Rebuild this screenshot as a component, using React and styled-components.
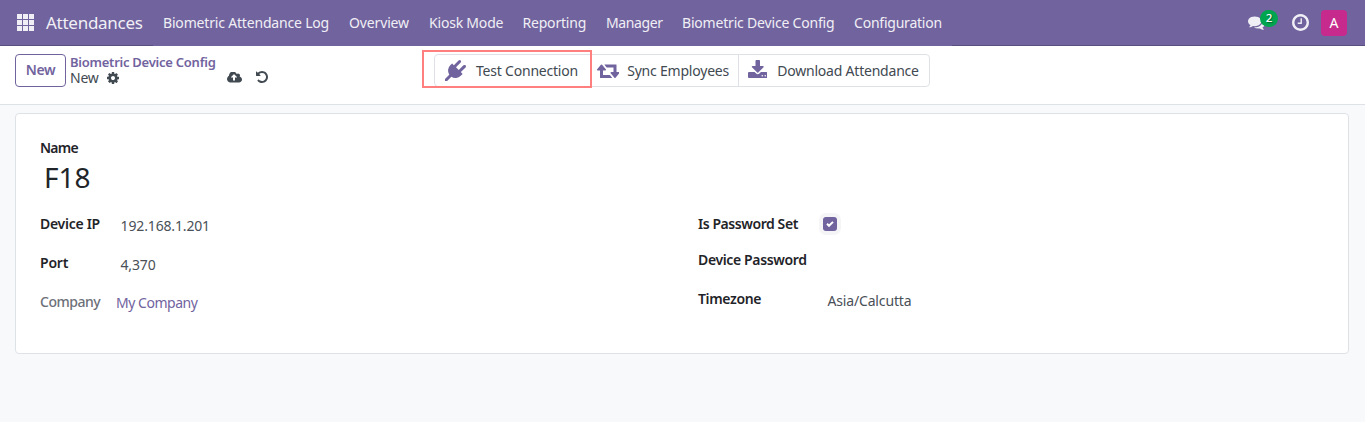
import React from "react";
import styled, { createGlobalStyle } from "styled-components";

const purple = "#71639e";
const line = "#dee2e6";
const text = "#414951";

const GlobalStyle = createGlobalStyle`
  *, *::before, *::after { box-sizing: border-box; }
  body {
    margin: 0;
    background: #f8f9fa;
    color: ${text};
    font-family: "Noto Sans", "Open Sans", sans-serif;
    font-size: 14px;
    line-height: 20px;
  }
`;

const glyphs = {
  plug: ["0 0 1792 1792", "M1755 453q37 38 37 90.5t-37 90.5l-401 400 150 150-160 160q-163 163-389.5 186.5t-411.5-100.5l-362 362h-181v-181l362-362q-124-185-100.5-411.5t186.5-389.5l160-160 150 150 400-401q38-37 91-37t90 37 37 90.5-37 90.5l-400 401 234 234 401-400q38-37 91-37t90 37z"],
  sync: ["64 0 1920 1792", "M1344 1504q0 13-9.5 22.5t-22.5 9.5h-960q-8 0-13.5-2t-9-7-5.5-8-3-11.5-1-11.5v-600h-192q-26 0-45-19t-19-45q0-24 15-41l320-384q19-22 49-22t49 22l320 384q15 17 15 41 0 26-19 45t-45 19h-192v384h576q16 0 25 11l160 192q7 10 7 21zm640-416q0 24-15 41l-320 384q-20 23-49 23t-49-23l-320-384q-15-17-15-41 0-26 19-45t45-19h192v-384h-576q-16 0-25-12l-160-192q-7-9-7-20 0-13 9.5-22.5t22.5-9.5h960q8 0 13.5 2t9 7 5.5 8 3 11.5 1 11.5v600h192q26 0 45 19t19 45z"],
  download: ["64 0 1664 1792", "M1344 1344q0-26-19-45t-45-19-45 19-19 45 19 45 45 19 45-19 19-45zm256 0q0-26-19-45t-45-19-45 19-19 45 19 45 45 19 45-19 19-45zm128-224v320q0 40-28 68t-68 28h-1472q-40 0-68-28t-28-68v-320q0-40 28-68t68-28h465l135 136q58 56 136 56t136-56l136-136h464q40 0 68 28t28 68zm-325-569q17 41-14 70l-448 448q-18 19-45 19t-45-19l-448-448q-31-29-14-70 17-39 59-39h256v-448q0-26 19-45t45-19h256q26 0 45 19t19 45v448h256q42 0 59 39z"],
  cog: ["128 128 1536 1536", "M1152 896q0-106-75-181t-181-75-181 75-75 181 75 181 181 75 181-75 75-181zm512-109v222q0 12-8 23t-20 13l-185 28q-19 54-39 91 35 50 107 138 10 12 10 25t-9 23q-27 37-99 108t-94 71q-12 0-26-9l-138-108q-44 23-91 38-16 136-29 186-7 28-36 28h-222q-14 0-24.5-8.5t-11.5-21.5l-28-184q-49-16-90-37l-141 107q-10 9-25 9-14 0-25-11-126-114-165-168-7-10-7-23 0-12 8-23 15-21 51-66.5t54-70.5q-27-50-41-99l-183-27q-13-2-21-12.5t-8-23.5v-222q0-12 8-23t19-13l186-28q14-46 39-92-40-57-107-138-10-12-10-24 0-10 9-23 26-36 98.5-107.5t94.5-71.5q13 0 26 10l138 107q44-23 91-38 16-136 29-186 7-28 36-28h222q14 0 24.5 8.5t11.5 21.5l28 184q49 16 90 37l142-107q9-9 24-9 13 0 25 10 129 119 165 170 7 8 7 22 0 12-8 23-15 21-51 66.5t-54 70.5q26 50 41 98l183 28q13 2 21 12.5t8 23.5z"],
  cloud: ["-64 256 1920 1280", "M1216 864q0-14-9-23l-352-352q-9-9-23-9t-23 9l-351 351q-10 12-10 24 0 14 9 23t23 9h224v352q0 13 9.5 22.5t22.5 9.5h192q13 0 22.5-9.5t9.5-22.5v-352h224q13 0 22.5-9.5t9.5-22.5zm640 288q0 159-112.5 271.5t-271.5 112.5h-1088q-185 0-316.5-131.5t-131.5-316.5q0-130 70-240t188-165q-2-30-2-43 0-212 150-362t362-150q156 0 285.5 87t188.5 231q71-62 166-62 106 0 181 75t75 181q0 76-41 138 130 31 213.5 135.5t83.5 238.5z"],
  undo: ["128 128 1536 1536", "M1664 896q0 156-61 298t-164 245-245 164-298 61q-172 0-327-72.5t-264-204.5q-7-10-6.5-22.5t8.5-20.5l137-138q10-9 25-9 16 2 23 12 73 95 179 147t225 52q104 0 198.5-40.5t163.5-109.5 109.5-163.5 40.5-198.5-40.5-198.5-109.5-163.5-163.5-109.5-198.5-40.5q-98 0-188 35.5t-160 101.5l137 138q31 30 14 69-17 40-59 40h-448q-26 0-45-19t-19-45v-448q0-42 40-59 39-17 69 14l130 129q107-101 244.5-156.5t284.5-55.5q156 0 298 61t245 164 164 245 61 298z"],
  comments: ["0 128 1792 1536", "M1408 768q0 139-94 257t-256.5 186.5-353.5 68.5q-86 0-176-16-124 88-278 128-36 9-86 16h-3q-11 0-20.5-8t-11.5-21q-1-3-1-6.5t.5-6.5 2-6l2.5-5 3.5-5.5 4-5 4.5-5 4-4.5q5-6 23-25t26-29.5 22.5-29 25-38.5 20.5-44q-124-72-195-177t-71-224q0-139 94-257t256.5-186.5 353.5-68.5 353.5 68.5 256.5 186.5 94 257zm384 256q0 120-71 224.5t-195 176.5q10 24 20.5 44t25 38.5 22.5 29 26 29.5 23 25q1 1 4 4.5t4.5 5 4 5 3.5 5.5l2.5 5 2 6 .5 6.5-1 6.5q-3 14-13 22t-22 7q-50-7-86-16-154-40-278-128-90 16-176 16-271 0-472-132 58 4 88 4 161 0 309-45t264-129q125-92 192-212t67-254q0-77-23-152 129 71 204 178t75 230z"],
  clock: ["128 128 1536 1536", "M1024 544v448q0 14-9 23t-23 9h-320q-14 0-23-9t-9-23v-64q0-14 9-23t23-9h224v-352q0-14 9-23t23-9h64q14 0 23 9t9 23zm416 352q0-148-73-273t-198-198-273-73-273 73-198 198-73 273 73 273 198 198 273 73 273-73 198-198 73-273zm224 0q0 209-103 385.5t-279.5 279.5-385.5 103-385.5-103-279.5-279.5-103-385.5 103-385.5 279.5-279.5 385.5-103 385.5 103 279.5 279.5 103 385.5z"],
};

const Svg = styled.svg`
  display: block;
  flex: none;
  fill: currentColor;
`;

function Icon({ name, width, height, className }) {
  const [viewBox, d] = glyphs[name];
  return (
    <Svg className={className} viewBox={viewBox} width={width} height={height} aria-hidden="true">
      <path d={d} />
    </Svg>
  );
}

const Navbar = styled.header`
  display: flex;
  height: 46px;
  background: ${purple};
  color: #f0eff5;
  box-shadow: inset 0 -1px #5a4f7f;
`;

const AppsGrid = styled.div`
  display: grid;
  grid-template-columns: repeat(3, 5px);
  grid-auto-rows: 5px;
  gap: 1px;
  margin: 14px 0 0 17px;
  height: 17px;

  span { background: #f0eff5; }
`;

const Brand = styled.a`
  width: 107px;
  margin: 0 0 0 12px;
  font-size: 17px;
  line-height: 46px;
  letter-spacing: -0.27px;
  white-space: nowrap;
`;

const Menu = styled.nav`
  display: flex;
  background: ${purple};
`;

const MenuItem = styled.a`
  width: ${(p) => p.$width + 20}px;
  padding: 0 10px;
  line-height: 46px;
  letter-spacing: ${(p) => p.$tracking}px;
  white-space: nowrap;
`;

const Tray = styled.div`
  display: flex;
  align-items: center;
  margin-left: auto;
  padding-right: 18px;
`;

const Messages = styled.div`
  position: relative;
  width: 44px;
  margin-top: -1px;
`;

const Clock = styled(Icon)`
  margin-top: -2px;
`;

const Badge = styled.span`
  position: absolute;
  left: 12px;
  top: -5px;
  width: 18px;
  height: 17px;
  border-radius: 9px;
  background: #00a54f;
  color: #fff;
  font-size: 11.5px;
  font-weight: 500;
  line-height: 16px;
  text-align: center;
  text-shadow: 1px 1px 1px rgba(0, 0, 0, 0.4);
`;

const Avatar = styled.div`
  width: 26px;
  height: 26px;
  margin-left: 12px;
  border-radius: 4px;
  background: #c62a8c;
  color: #fff;
  line-height: 26px;
  text-align: center;
`;

const ControlPanel = styled.section`
  display: flex;
  align-items: flex-start;
  height: 59px;
  padding: 8px 0 0 15px;
  border-bottom: 1px solid ${line};
  background: #fff;
`;

const NewButton = styled.button`
  width: 51px;
  height: 33px;
  padding: 0 0 1px;
  border: 1px solid ${purple};
  border-radius: 4px;
  background: #fff;
  color: ${purple};
  font: 600 14px/20px "Noto Sans", sans-serif;
  letter-spacing: -0.3px;
`;

const Breadcrumb = styled.div`
  width: 157px;
  padding-left: 4px;
`;

const Parent = styled.a`
  display: block;
  height: 15px;
  color: ${purple};
  font-size: 13px;
  font-weight: 600;
  line-height: 17px;
  letter-spacing: -0.25px;
  white-space: nowrap;
`;

const Current = styled.div`
  display: flex;
  align-items: center;
  gap: 8.5px;
  height: 18px;
  line-height: 18px;
  letter-spacing: -0.2px;
`;

const RecordActions = styled.div`
  display: flex;
  align-items: center;
  gap: 14px;
  width: 211px;
  height: 18px;
  padding-left: 4px;
  margin-top: 14px;
`;

const ButtonBox = styled.div`
  position: relative;
  display: flex;
  height: 33px;
  border: 1px solid ${line};
  border-radius: 4px;
`;

const StatButton = styled.button`
  display: flex;
  align-items: center;
  width: ${(p) => p.$width}px;
  padding: 0 0 0 ${(p) => p.$inset}px;
  border: 0;
  border-left: ${(p) => (p.$divided ? `1px solid ${line}` : "0")};
  background: none;
  color: ${text};
  font: 400 14px/20px "Noto Sans", sans-serif;
  letter-spacing: -0.21px;
  white-space: nowrap;

  svg {
    margin-right: ${(p) => p.$gap}px;
    color: ${purple};
  }
`;

const Highlight = styled.div`
  position: absolute;
  left: -13px;
  top: -5px;
  width: 170px;
  height: 38px;
  border: 2px solid #ff7f7f;
  pointer-events: none;
`;

const Sheet = styled.main`
  width: 1334px;
  height: 241px;
  margin: 8px 0 0 15px;
  padding: 24px 24px 0;
  border: 1px solid ${line};
  border-radius: 4px;
  background: #fff;
`;

const Label = styled.label`
  width: ${(p) => p.$width}px;
  color: ${(p) => (p.$muted ? "#6c7078" : "#1f2429")};
  font-weight: ${(p) => (p.$muted ? 500 : 600)};
  letter-spacing: ${(p) => p.$tracking}px;
  white-space: nowrap;
`;

const Title = styled.h1`
  margin: 1px 0 19px 4px;
  color: #212529;
  font-size: 28px;
  font-weight: 400;
  line-height: 36px;
`;

const Columns = styled.div`
  display: grid;
  grid-template-columns: 658px 1fr;
`;

const Field = styled.div`
  display: flex;
  height: ${(p) => p.$height || 39}px;
`;

const Value = styled.span`
  padding-top: ${(p) => (p.$link ? 1 : 2)}px;
  color: ${(p) => (p.$link ? purple : "#495057")};
  letter-spacing: ${(p) => p.$tracking}px;
`;

const Checkbox = styled.span`
  display: flex;
  align-items: center;
  justify-content: center;
  width: 14px;
  height: 14px;
  margin-top: 3px;
  border-radius: 3px;
  background: ${purple};
  box-shadow: 0 0 0 4px #f5f5f8;

  svg { fill: none; stroke: #fff; stroke-width: 2; }
`;

const menu = [
  ["Biometric Attendance Log", 166, -0.18],
  ["Overview", 60, -0.14],
  ["Kiosk Mode", 73.5, -0.2],
  ["Reporting", 63.5, -0.2],
  ["Manager", 56, -0.4],
  ["Biometric Device Config", 152, -0.19],
  ["Configuration", 88, -0.22],
];

export default function App() {
  return (
    <>
      <GlobalStyle />
      <Navbar>
        <AppsGrid>
          {Array.from({ length: 9 }, (_, i) => <span key={i} />)}
        </AppsGrid>
        <Brand>Attendances</Brand>
        <Menu>
          {menu.map(([label, width, tracking]) => (
            <MenuItem key={label} $width={width} $tracking={tracking}>{label}</MenuItem>
          ))}
        </Menu>
        <Tray>
          <Messages>
            <Icon name="comments" width={17} height={15} />
            <Badge>2</Badge>
          </Messages>
          <Clock name="clock" width={17} height={17} />
          <Avatar>A</Avatar>
        </Tray>
      </Navbar>

      <ControlPanel>
        <NewButton>New</NewButton>
        <Breadcrumb>
          <Parent>Biometric Device Config</Parent>
          <Current>
            New
            <Icon name="cog" width={12} height={12} />
          </Current>
        </Breadcrumb>
        <RecordActions>
          <Icon name="cloud" width={15} height={11} />
          <Icon name="undo" width={12} height={12} />
        </RecordActions>
        <ButtonBox>
          <StatButton $width={156} $inset={10} $gap={10}>
            <Icon name="plug" width={21} height={21} />
            Test Connection
          </StatButton>
          <StatButton $width={147} $inset={4.5} $gap={8.2} $divided>
            <Icon name="sync" width={22.5} height={21} />
            Sync Employees
          </StatButton>
          <StatButton $width={191} $inset={8.5} $gap={10.2} $divided>
            <Icon name="download" width={19.5} height={21} />
            Download Attendance
          </StatButton>
          <Highlight />
        </ButtonBox>
      </ControlPanel>

      <Sheet>
        <Label $tracking={-0.75}>Name</Label>
        <Title>F18</Title>
        <Columns>
          <div>
            <Field>
              <Label $width={80.6} $tracking={-0.28}>Device IP</Label>
              <Value $tracking={-0.15}>192.168.1.201</Value>
            </Field>
            <Field>
              <Label $width={80.4} $tracking={-0.2}>Port</Label>
              <Value $tracking={-0.1}>4,370</Value>
            </Field>
            <Field>
              <Label $width={76} $tracking={-0.5} $muted>Company</Label>
              <Value $tracking={-0.48} $link>My Company</Value>
            </Field>
          </div>
          <div>
            <Field $height={36}>
              <Label $width={125} $tracking={-0.43}>Is Password Set</Label>
              <Checkbox>
                <svg width="8" height="6" viewBox="0 0 8 6"><path d="M1 2.8 3 4.8 7 .9" /></svg>
              </Checkbox>
            </Field>
            <Field>
              <Label $width={129} $tracking={-0.36}>Device Password</Label>
            </Field>
            <Field>
              <Label $width={129.4} $tracking={-0.35}>Timezone</Label>
              <Value $tracking={-0.15}>Asia/Calcutta</Value>
            </Field>
          </div>
        </Columns>
      </Sheet>
    </>
  );
}
